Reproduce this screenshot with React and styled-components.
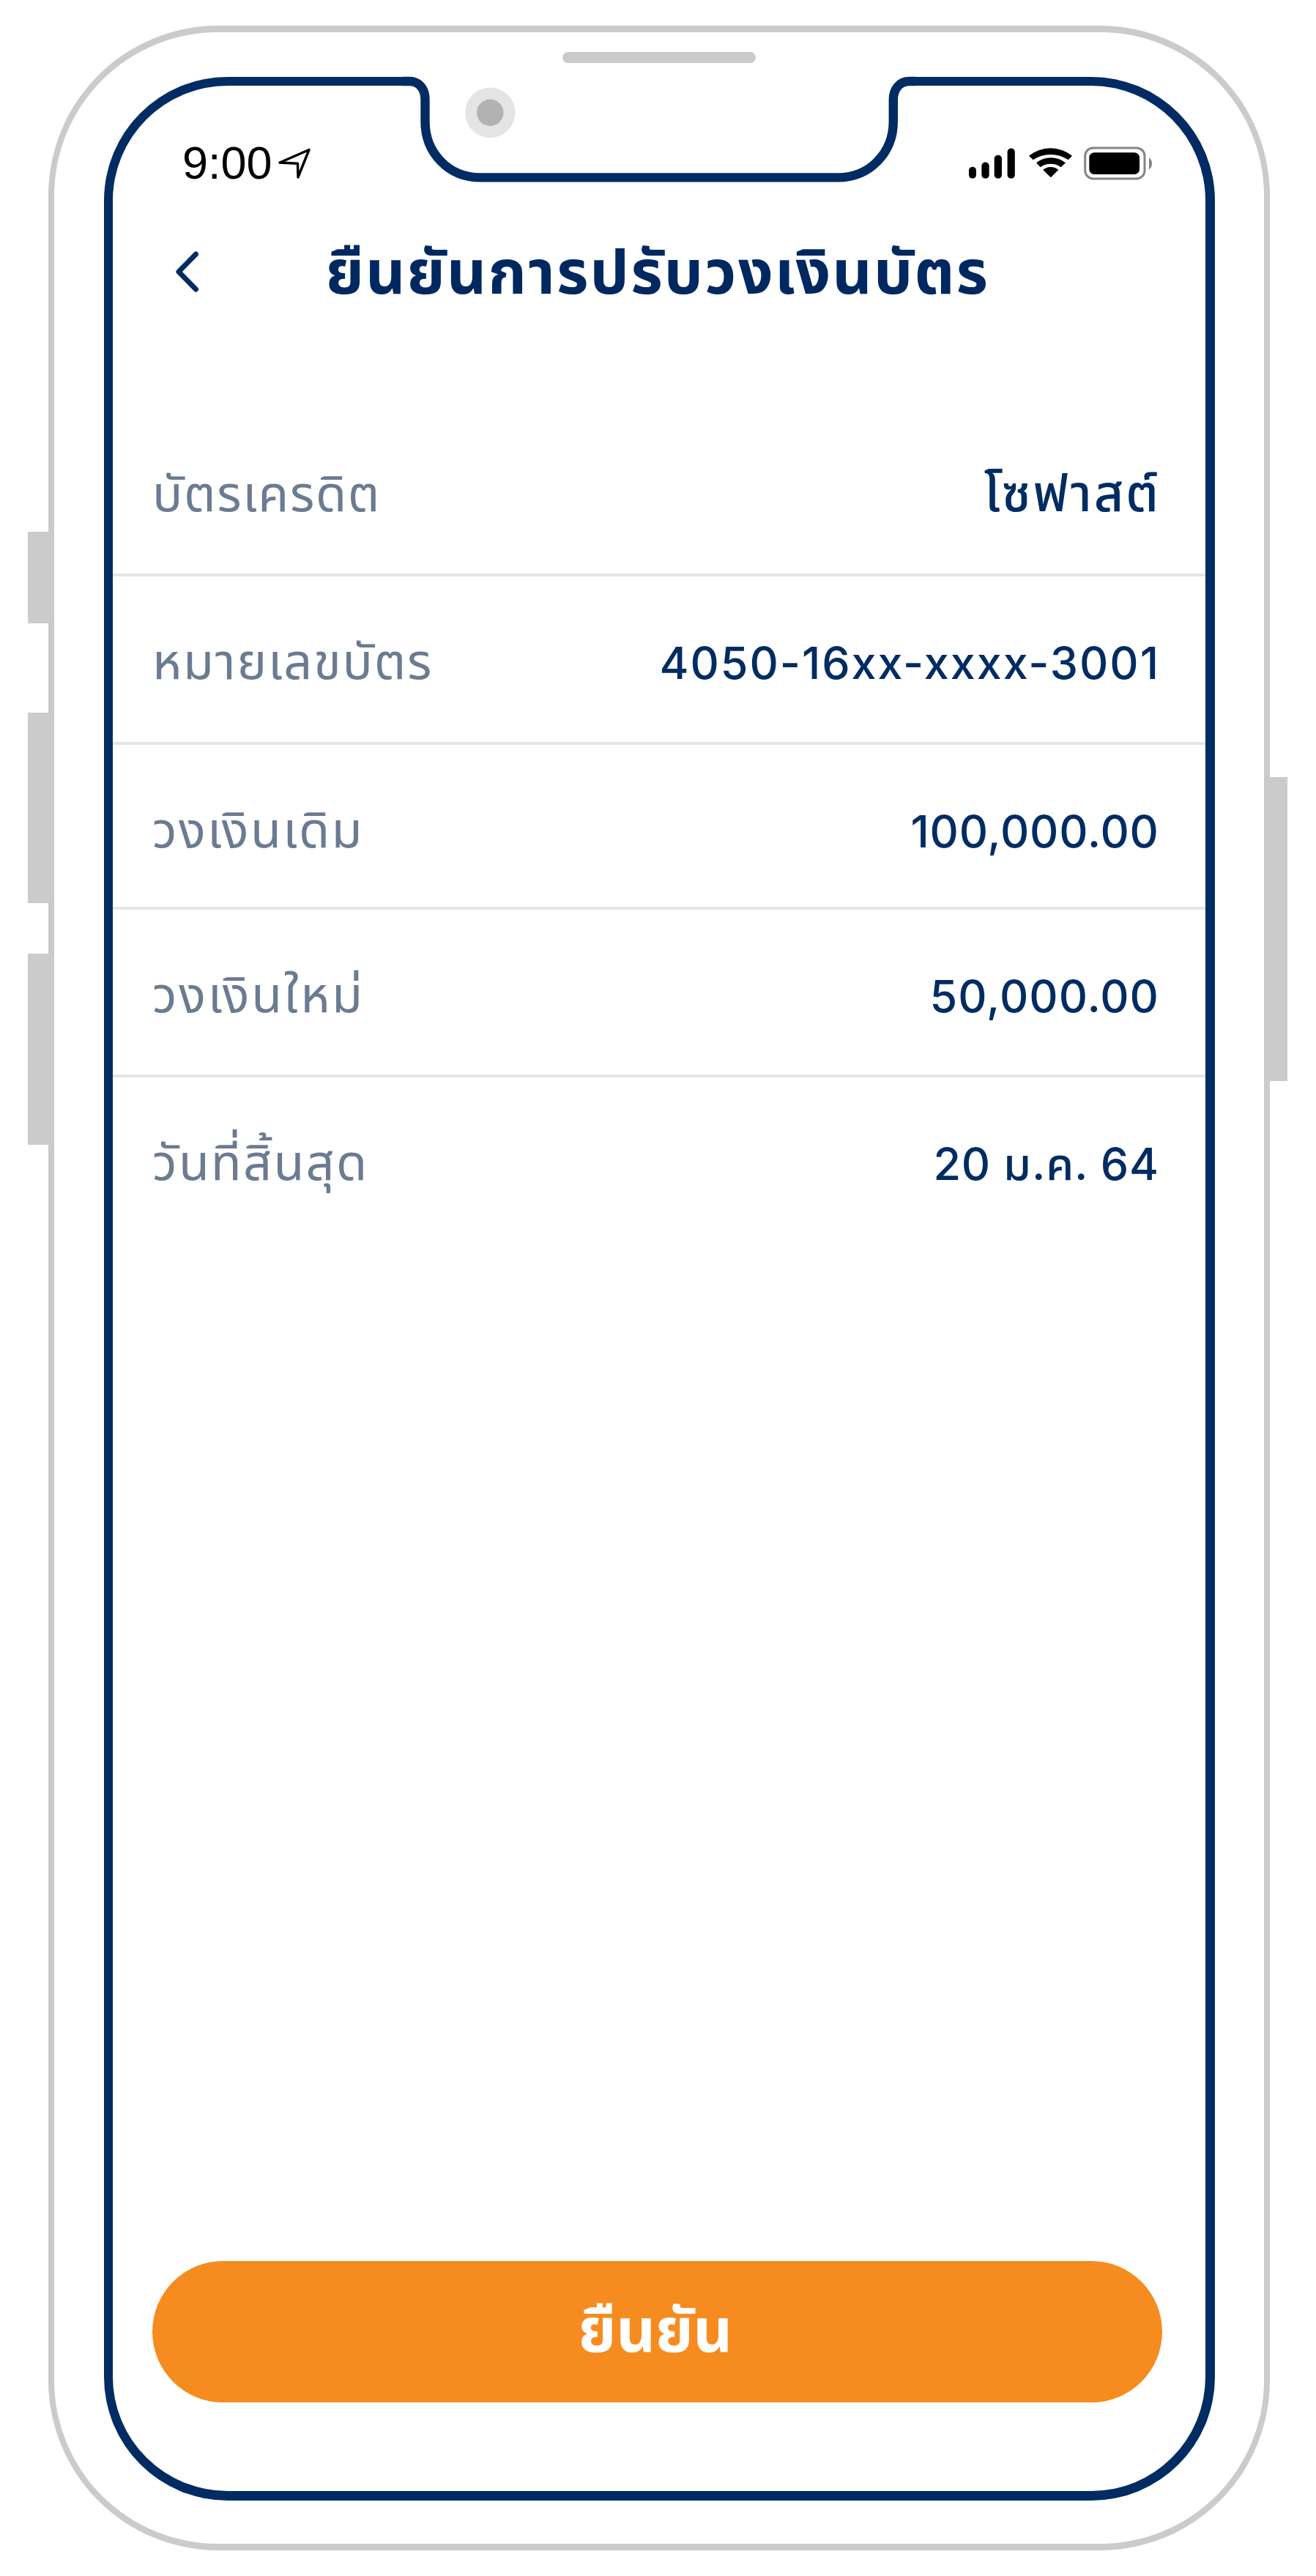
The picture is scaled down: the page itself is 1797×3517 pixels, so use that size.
import React from 'react';
import styled, { createGlobalStyle } from 'styled-components';

const navy = '#002c63';
const grey = '#cbcbcb';
const thai = "'Inter', 'Noto Sans Thai', 'Noto Sans', sans-serif";

const GlobalStyle = createGlobalStyle`
  * { box-sizing: border-box; }
  body { margin: 0; background: #ffffff; }
`;

const Page = styled.div`
  display: flex;
  width: 1797px;
  height: 3517px;
  padding: 35px 39px 0 38px;
  background: #ffffff;
`;

const Side = styled.div`
  display: flex;
  flex-direction: column;
  flex: none;
  width: ${(p) => p.$width}px;
  padding-top: ${(p) => p.$offset}px;
`;

const SideButton = styled.div`
  flex: none;
  height: ${(p) => p.$height}px;
  margin-bottom: ${(p) => p.$gap || 0}px;
  background: ${grey};
`;

const Device = styled.div`
  position: relative;
  width: 1668px;
  height: 3447px;
  padding: 61px 67px 59px 68px;
  border: solid ${grey};
  border-width: 9px 8px;
  border-radius: 232px;
`;

const Speaker = styled.div`
  position: absolute;
  top: 27px;
  left: 694px;
  width: 264px;
  height: 15px;
  border-radius: 8px;
  background: ${grey};
`;

const Notch = styled.svg`
  position: absolute;
  top: 56px;
  left: 476px;
  width: 700px;
  height: 160px;
`;

const Screen = styled.main`
  display: flex;
  flex-direction: column;
  height: 100%;
  border: solid ${navy};
  border-width: 12px 13px 13px 12px;
  border-radius: 169px;
  background: #ffffff;
`;

const StatusBar = styled.div`
  display: flex;
  flex: none;
  align-items: center;
  justify-content: space-between;
  height: 212px;
  padding: 0 73px 0 95px;
`;

const Clock = styled.div`
  display: flex;
  align-items: center;
  gap: 7px;
  color: #000;
  font: 400 63px/72px 'Liberation Sans', Arial, sans-serif;
`;

const Time = styled.span`
  margin-top: -2px;
`;

const StatusIcons = styled.div`
  display: flex;
  align-items: center;
`;

const Header = styled.header`
  display: grid;
  grid-template-columns: 84px 1fr 84px;
  flex: none;
  align-items: center;
  height: 84px;
  padding: 0 64px 0 60px;
`;

const BackButton = styled.button`
  display: grid;
  place-items: center;
  height: 84px;
  padding: 0;
  border: 0;
  background: none;
`;

const Title = styled.h1`
  margin: 0;
  color: #002860;
  font: 700 84px/84px ${thai};
  letter-spacing: 2.2px;
  text-align: center;
  white-space: nowrap;
`;

const Details = styled.dl`
  display: flex;
  flex-direction: column;
  flex: 1;
  margin: 0;
  padding-top: 144px;
`;

const Row = styled.div`
  display: flex;
  flex: none;
  align-items: baseline;
  justify-content: space-between;
  height: ${(p) => p.$height}px;
  padding: 71px 64px 0 54px;
  border-bottom: ${(p) => (p.$last ? 0 : 4)}px solid #e2e6ed;
`;

const Label = styled.dt`
  color: #6b7b91;
  font: 400 68.5px/90px ${thai};
  letter-spacing: ${(p) => p.$track}px;
  white-space: nowrap;
`;

const Value = styled.dd`
  margin: 0 ${(p) => -p.$track}px 0 0;
  color: ${navy};
  font: 500 ${(p) => p.$size || 61}px/90px ${thai};
  letter-spacing: ${(p) => p.$track}px;
  white-space: nowrap;
`;

const Footer = styled.footer`
  display: flex;
  flex: none;
  padding: 0 59px 121px 54px;
`;

const ConfirmButton = styled.button`
  flex: 1;
  height: 193px;
  padding: 0 5px 5px 0;
  border: 0;
  border-radius: 97px;
  background: #f68c1f;
  color: #ffffff;
  font: 700 83px/90px ${thai};
`;

const rows = [
  { label: 'บัตรเครดิต', labelTrack: 1.6, value: 'โซฟาสต์', size: 70, track: 2.8, height: 230 },
  { label: 'หมายเลขบัตร', labelTrack: 1.8, value: '4050-16xx-xxxx-3001', track: 1.95, height: 230 },
  { label: 'วงเงินเดิม', labelTrack: 2.3, value: '100,000.00', track: 0.8, height: 225 },
  { label: 'วงเงินใหม่', labelTrack: 2.6, value: '50,000.00', track: 1, height: 229 },
  { label: 'วันที่สิ้นสุด', labelTrack: 2.2, value: '20 ม.ค. 64', track: 0.8, height: 229 },
];

function LocationArrow() {
  return (
    <svg width="46" height="46" viewBox="0 0 46 46">
      <path d="M3 22 L43 4.5 L28 42 L27.5 23.3 Z" fill="none" stroke="#000" strokeWidth="3.4" strokeLinejoin="round" />
    </svg>
  );
}

function SignalWifiBattery() {
  return (
    <svg width="250" height="46" viewBox="1323 200.5 250 46">
      <rect x="1323" y="228.3" width="10" height="16" rx="5" />
      <rect x="1340.4" y="222" width="10.3" height="22.3" rx="5" />
      <rect x="1357.7" y="212.3" width="10.3" height="32" rx="5" />
      <rect x="1375.6" y="203" width="10.2" height="41.3" rx="5" />
      <path d="M1405 213.2 A47.3 47.3 0 0 1 1464 213.2 L1458.7 218.7 A43 43 0 0 0 1410.7 218.7 Z" />
      <path d="M1415 222.7 A32 32 0 0 1 1455 222.7 L1448.7 228.7 A24.7 24.7 0 0 0 1420.7 228.7 Z" />
      <path d="M1424.3 232.6 A15.7 15.7 0 0 1 1445.3 232.6 L1434.8 242.8 Z" />
      <rect x="1481.7" y="202.4" width="81.3" height="42" rx="11" fill="none" stroke="#858585" strokeWidth="3" />
      <rect x="1487.3" y="208.7" width="68.7" height="29.8" rx="7" />
      <path d="M1569 215.5 Q1573 218.5 1573 223.7 Q1573 229 1569 232 Z" fill="#858585" />
    </svg>
  );
}

export default function App() {
  return (
    <Page>
      <GlobalStyle />
      <Side $width={28} $offset={691}>
        <SideButton $height={125} $gap={122} />
        <SideButton $height={260} $gap={69} />
        <SideButton $height={261} />
      </Side>
      <Device>
        <Screen>
          <StatusBar>
            <Clock>
              <Time>9:00</Time>
              <LocationArrow />
            </Clock>
            <StatusIcons>
              <SignalWifiBattery />
            </StatusIcons>
          </StatusBar>
          <Header>
            <BackButton aria-label="ย้อนกลับ">
              <svg width="34" height="56" viewBox="0 0 34 56">
                <path d="M28.5 4 L5 28 L28.5 52" fill="none" stroke={navy} strokeWidth="7" strokeLinecap="round" strokeLinejoin="round" />
              </svg>
            </BackButton>
            <Title>ยืนยันการปรับวงเงินบัตร</Title>
          </Header>
          <Details>
            {rows.map((row, i) => (
              <Row key={row.label} $height={row.height} $last={i === rows.length - 1}>
                <Label $track={row.labelTrack}>{row.label}</Label>
                <Value $track={row.track} $size={row.size}>{row.value}</Value>
              </Row>
            ))}
          </Details>
          <Footer>
            <ConfirmButton>ยืนยัน</ConfirmButton>
          </Footer>
        </Screen>
        <Notch viewBox="550 100 700 160">
          <rect x="560" y="100" width="681" height="20" fill="#fff" />
          <path d="M550 111 H559 C573 111 580.5 122 580.5 136 V166 C580.5 208 612 242.4 656 242.4 H1144 C1188 242.4 1219.8 208 1219.8 166 V136 C1219.8 122 1228 111 1242 111 H1250" fill="none" stroke={navy} strokeWidth="12.4" />
          <circle cx="669.3" cy="153.8" r="34.2" fill="#e4e4e4" />
          <circle cx="669.3" cy="153.8" r="18.2" fill="#b2b2b2" />
        </Notch>
        <Speaker />
      </Device>
      <Side $width={24} $offset={1026}>
        <SideButton $height={415} />
      </Side>
    </Page>
  );
}
